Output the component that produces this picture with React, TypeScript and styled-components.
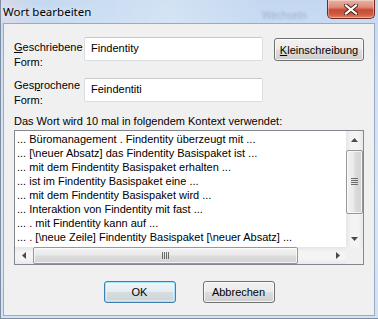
import styled, { createGlobalStyle, css } from 'styled-components';

const GlobalStyle = createGlobalStyle`
  html, body {
    margin: 0;
    padding: 0;
    overflow: hidden;
    background: #ffffff;
  }
  * {
    box-sizing: border-box;
  }
`;

const Window = styled.div`
  width: 378px;
  height: 319px;
  display: flex;
  flex-direction: column;
  border-left: 1px solid #7d8ea3;
  border-bottom: 1px solid #7d8ea3;
  background: linear-gradient(180deg, #c3d8f0 0%, #cfe0f4 20%, #d9e6f5 60%, #d3e2f3 100%);
  font-family: 'Liberation Sans', Arial, sans-serif;
  font-size: 11px;
  color: #000;
`;

const TitleBar = styled.div`
  height: 23px;
  flex: none;
  display: flex;
  align-items: flex-start;
  padding-left: 2px;
  background: linear-gradient(90deg, rgba(255, 220, 220, 0.35) 0%, rgba(200, 225, 245, 0) 10%, rgba(255, 255, 255, 0.25) 45%, rgba(255, 255, 255, 0) 70%);
`;

const Title = styled.span`
  margin-top: 4px;
  font-family: 'Noto Sans', 'Open Sans', sans-serif;
  font-size: 11.5px;
  line-height: 16px;
  color: #000;
  text-shadow: 0 0 6px rgba(255, 255, 255, 0.9);
`;

const GhostText = styled.span`
  margin-left: auto;
  margin-right: 20px;
  margin-top: 9px;
  font-family: 'Noto Sans', sans-serif;
  font-size: 10px;
  line-height: 12px;
  color: rgba(60, 70, 90, 0.28);
  filter: blur(0.8px);
`;

const CloseButton = styled.div`
  width: 48px;
  height: 19px;
  margin-right: 3px;
  display: flex;
  align-items: center;
  justify-content: center;
  border: 1px solid #6e2a20;
  border-top: none;
  border-radius: 0 0 5px 5px;
  background: linear-gradient(180deg, #eab2a4 0%, #dc8c78 40%, #c74a34 55%, #cf5a40 80%, #e0866c 100%);
  box-shadow: inset 0 0 0 1px rgba(255, 255, 255, 0.35);
`;

const Client = styled.div`
  flex: 1;
  margin: 0 3px 2px 2px;
  border: 1px solid #98abc3;
  background: #f0f0f0;
  padding: 13px 0 0 10px;
  display: flex;
  flex-direction: column;
`;

const FieldRow = styled.div<{ $gap?: number }>`
  display: flex;
  align-items: flex-start;
  height: 24px;
  flex: none;
  margin-top: ${(p) => p.$gap ?? 0}px;
`;

const FieldLabel = styled.label<{ $pad: number }>`
  width: 70px;
  padding-top: ${(p) => p.$pad}px;
  line-height: 15px;
  white-space: nowrap;
`;

const Key = styled.span`
  text-decoration: underline;
  text-underline-offset: 1px;
`;

const TextBox = styled.div`
  width: 179px;
  height: 24px;
  padding: 3px 0 0 6px;
  line-height: 14px;
  background: #fff;
  border: 1px solid #dadde2;
  border-top-color: #c6c9ce;
  border-radius: 2px;
`;

const buttonFace = css`
  border-radius: 3px;
  background: linear-gradient(180deg, #f2f2f2 0%, #ebebeb 48%, #dddddd 52%, #cfcfcf 100%);
  box-shadow: inset 0 0 0 1px rgba(255, 255, 255, 0.75);
  display: flex;
  align-items: center;
  justify-content: center;
  color: #000;
`;

const PushButton = styled.div<{ $default?: boolean }>`
  ${buttonFace};
  width: 72px;
  height: 22px;
  border: 1px solid ${(p) => (p.$default ? '#3c7fb1' : '#707070')};
  ${(p) =>
    p.$default &&
    css`
      box-shadow: inset 0 0 0 1px #a6e2fa, inset 0 0 0 2px rgba(255, 255, 255, 0.35);
      background: linear-gradient(180deg, #eef3f6 0%, #e6ecef 48%, #d6dde1 52%, #cdd4d8 100%);
    `}
`;

const SideButton = styled.div`
  ${buttonFace};
  width: 90px;
  height: 23px;
  margin-top: 1px;
  margin-left: 11px;
  border: 1px solid #707070;
`;

const ContextLabel = styled.div`
  margin-top: 12px;
  line-height: 14px;
  flex: none;
`;

const ListBox = styled.div`
  margin-top: 2px;
  width: 350px;
  height: 135px;
  flex: none;
  border: 1px solid #828790;
  background: #fff;
  display: grid;
  grid-template-columns: 1fr 17px;
  grid-template-rows: 1fr 17px;
`;

const ListContent = styled.div`
  overflow: hidden;
  padding: 1px 0 0 2px;
  white-space: nowrap;
`;

const ListLine = styled.div`
  line-height: 14px;
  height: 14px;
`;

const VTrack = styled.div`
  display: flex;
  flex-direction: column;
  background: linear-gradient(90deg, #e6e6e6 0%, #f4f4f4 30%, #f4f4f4 70%, #e9e9e9 100%);
`;

const HTrack = styled.div`
  display: flex;
  background: linear-gradient(180deg, #e6e6e6 0%, #f4f4f4 30%, #f4f4f4 70%, #e9e9e9 100%);
`;

const ArrowCell = styled.div`
  width: 17px;
  height: 17px;
  flex: none;
  display: flex;
  align-items: center;
  justify-content: center;
`;

const Thumb = styled.div<{ $vertical?: boolean }>`
  border: 1px solid #979797;
  border-radius: 2px;
  display: flex;
  align-items: center;
  justify-content: center;
  flex: none;
  box-shadow: inset 0 0 0 1px rgba(255, 255, 255, 0.7);
  ${(p) =>
    p.$vertical
      ? css`
          margin: 2px 0 0 0;
          width: 17px;
          height: 64px;
          background: linear-gradient(90deg, #f3f3f3 0%, #e9e9e9 45%, #dcdcdc 55%, #d3d3d3 100%);
        `
      : css`
          margin: 0 0 0 1px;
          width: 265px;
          height: 17px;
          background: linear-gradient(180deg, #f3f3f3 0%, #e9e9e9 45%, #dcdcdc 55%, #d3d3d3 100%);
        `}
`;

const Spacer = styled.div`
  flex: 1;
`;

const Corner = styled.div`
  background: #f0f0f0;
`;

const ButtonBar = styled.div`
  margin-top: 16px;
  margin-left: -10px;
  display: flex;
  justify-content: center;
  gap: 27px;
  flex: none;
`;

const lines = [
  '... Büromanagement . Findentity überzeugt mit ...',
  '... [\\neuer Absatz] das Findentity Basispaket ist ...',
  '... mit dem Findentity Basispaket erhalten ...',
  '... ist im Findentity Basispaket eine ...',
  '... mit dem Findentity Basispaket wird ...',
  '... Interaktion von Findentity mit fast ...',
  '... . mit Findentity kann auf ...',
  '... . [\\neue Zeile] Findentity Basispaket [\\neuer Absatz] ...',
  '... und einheitlicher Oberfläche von Findentity ...',
  '... Findentity Basispaket ...',
];

function Arrow({ dir }: { dir: 'up' | 'down' | 'left' | 'right' }) {
  const pts = {
    up: '0,4 3.5,0 7,4',
    down: '0,0 3.5,4 7,0',
    left: '4,0 0,3.5 4,7',
    right: '0,0 4,3.5 0,7',
  }[dir];
  const horizontal = dir === 'left' || dir === 'right';
  return (
    <svg width={horizontal ? 4 : 7} height={horizontal ? 7 : 4} viewBox={horizontal ? '0 0 4 7' : '0 0 7 4'}>
      <polygon points={pts} fill="#4a4a4a" />
    </svg>
  );
}

function Grip({ vertical }: { vertical?: boolean }) {
  return vertical ? (
    <svg width="7" height="8" viewBox="0 0 7 8">
      {[0, 2, 4, 6].map((y) => (
        <rect key={y} x="0" y={y} width="7" height="1" fill="#6b6b6b" />
      ))}
    </svg>
  ) : (
    <svg width="8" height="7" viewBox="0 0 8 7">
      {[0, 2, 4, 6].map((x) => (
        <rect key={x} x={x} y="0" width="1" height="7" fill="#6b6b6b" />
      ))}
    </svg>
  );
}

export default function App() {
  return (
    <>
      <GlobalStyle />
      <Window>
        <TitleBar>
          <Title>Wort bearbeiten</Title>
          <GhostText>Wechseln</GhostText>
          <CloseButton>
            <svg width="14" height="11" viewBox="0 0 14 11">
              <path d="M2 1.5 L12 9.5 M12 1.5 L2 9.5" stroke="#4a1b14" strokeWidth="4" strokeLinecap="square" />
              <path d="M2 1.5 L12 9.5 M12 1.5 L2 9.5" stroke="#ffffff" strokeWidth="2.2" strokeLinecap="square" />
            </svg>
          </CloseButton>
        </TitleBar>
        <Client>
          <FieldRow>
            <FieldLabel $pad={3}>
              <Key>G</Key>eschriebene
              <br />
              Form:
            </FieldLabel>
            <TextBox>Findentity</TextBox>
            <SideButton>
              <span>
                <Key>K</Key>leinschreibung
              </span>
            </SideButton>
          </FieldRow>
          <FieldRow $gap={17}>
            <FieldLabel $pad={0}>
              Ges<Key>p</Key>rochene
              <br />
              Form:
            </FieldLabel>
            <TextBox>Feindentiti</TextBox>
          </FieldRow>
          <ContextLabel>Das Wort wird 10 mal in folgendem Kontext verwendet:</ContextLabel>
          <ListBox>
            <ListContent>
              {lines.map((l, i) => (
                <ListLine key={i}>{l}</ListLine>
              ))}
            </ListContent>
            <VTrack>
              <ArrowCell>
                <Arrow dir="up" />
              </ArrowCell>
              <Thumb $vertical>
                <Grip vertical />
              </Thumb>
              <Spacer />
              <ArrowCell>
                <Arrow dir="down" />
              </ArrowCell>
            </VTrack>
            <HTrack>
              <ArrowCell>
                <Arrow dir="left" />
              </ArrowCell>
              <Thumb>
                <Grip />
              </Thumb>
              <Spacer />
              <ArrowCell>
                <Arrow dir="right" />
              </ArrowCell>
            </HTrack>
            <Corner />
          </ListBox>
          <ButtonBar>
            <PushButton $default>OK</PushButton>
            <PushButton>Abbrechen</PushButton>
          </ButtonBar>
        </Client>
      </Window>
    </>
  );
}
